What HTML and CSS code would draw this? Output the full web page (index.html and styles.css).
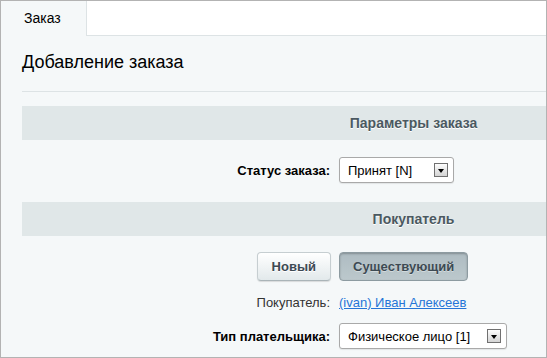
FILE: index.html
```html
<!DOCTYPE html>
<html lang="ru">
<head>
    <meta charset="UTF-8">
    <title>Добавление заказа</title>
    <link rel="stylesheet" href="styles.css">
</head>
<body>
    <div class="window">
        <div class="tabs">
            <div class="tab active">Заказ</div>
            <div class="tab-filler"></div>
        </div>

        <div class="content">
            <h1 class="page-title">Добавление заказа</h1>

            <div class="edit-table">
                <!-- Order params -->
                <div class="section-head">Параметры заказа</div>
                <div class="form-row row-status">
                    <div class="field-label bold">Статус заказа:</div>
                    <div class="field-value">
                        <div class="select select-status">
                            <span>Принят [N]</span>
                            <span class="select-arrow"></span>
                        </div>
                    </div>
                </div>

                <!-- Buyer -->
                <div class="section-head">Покупатель</div>
                <div class="form-row row-buttons">
                    <div class="field-label">
                        <button class="btn">Новый</button>
                    </div>
                    <div class="field-value">
                        <button class="btn btn-pressed">Существующий</button>
                    </div>
                </div>
                <div class="form-row row-buyer">
                    <div class="field-label muted">Покупатель:</div>
                    <div class="field-value">
                        <a href="#" class="user-link">(ivan) Иван Алексеев</a>
                    </div>
                </div>
                <div class="form-row row-payer">
                    <div class="field-label bold">Тип плательщика:</div>
                    <div class="field-value">
                        <div class="select select-payer">
                            <span>Физическое лицо [1]</span>
                            <span class="select-arrow"></span>
                        </div>
                    </div>
                </div>
            </div>
        </div>
    </div>
</body>
</html>
```

FILE: styles.css
```css
body {
    margin: 0;
    font-family: "Liberation Sans", Arial, sans-serif;
    font-size: 13px;
    color: #000;
    background-color: #fff;
}

.window {
    width: 547px;
    height: 358px;
    box-sizing: border-box;
    border: 1px solid #b3b3b3;
    background-color: #f5f8f9;
    overflow: hidden;
}

/* Tabs */
.tabs {
    display: flex;
    height: 35px;
}

.tab {
    width: 86px;
    box-sizing: border-box;
    padding-left: 23px;
    border-right: 1px solid #dde3e5;
    line-height: 34px;
    font-size: 14px;
    color: #000;
}

.tab-filler {
    flex: 1;
    box-sizing: border-box;
    background-color: #fff;
    border-bottom: 1px solid #dde3e5;
}

/* Content */
.content {
    padding-left: 21px;
}

.page-title {
    margin: 0;
    padding: 16px 0 19px;
    font-size: 18px;
    font-weight: normal;
    line-height: 20px;
    border-bottom: 1px solid #dde3e5;
}

.edit-table {
    width: 783px;
    margin-top: 14px;
}

.section-head {
    height: 34px;
    line-height: 34px;
    text-align: center;
    font-size: 14px;
    font-weight: bold;
    color: #4b5961;
    text-shadow: 0 1px 0 #fff;
    background-color: #e0e7e8;
}

.form-row {
    display: grid;
    grid-template-columns: 313px 470px;
    align-items: center;
}

.field-label {
    text-align: right;
    padding-right: 5px;
}

.field-value {
    padding-left: 4px;
}

.bold {
    font-weight: bold;
}

.muted {
    color: #333;
}

.row-status {
    padding: 17px 0 19px;
}

.row-buttons {
    padding-top: 16px;
}

.row-buttons .field-label {
    padding-right: 4px;
}

.row-buyer {
    padding-top: 14px;
    line-height: 16px;
}

.row-payer {
    padding-top: 12px;
}

/* Select box */
.select {
    display: flex;
    align-items: center;
    justify-content: space-between;
    height: 26px;
    box-sizing: border-box;
    padding: 0 5px 0 8px;
    border: 1px solid #a9a9a9;
    border-radius: 3px;
    background-color: #fff;
    box-shadow: 0 1px 1px rgba(0, 0, 0, 0.08);
}

.select-status {
    width: 115px;
}

.select-payer {
    width: 168px;
}

.select-arrow {
    position: relative;
    width: 14px;
    height: 14px;
    border: 1px solid #707070;
    background: linear-gradient(#fdfdfd, #d4d4d4);
    box-sizing: border-box;
}

.select-arrow::after {
    content: "";
    position: absolute;
    left: 3px;
    top: 5px;
    border-left: 3.5px solid transparent;
    border-right: 3.5px solid transparent;
    border-top: 4px solid #000;
}

/* Buttons */
.btn {
    height: 29px;
    padding: 0 14px;
    font-family: "Liberation Sans", Arial, sans-serif;
    font-size: 13px;
    font-weight: bold;
    color: #3d4a53;
    text-shadow: 0 1px 0 #fff;
    border: 1px solid #c6ced1;
    border-bottom-color: #aab4b8;
    border-radius: 4px;
    background: linear-gradient(#ffffff, #e2e9eb);
    box-shadow: 0 1px 1px rgba(0, 0, 0, 0.12);
    cursor: pointer;
}

.btn-pressed {
    padding: 0 13px;
    border-color: #8d9ba1;
    background: linear-gradient(#aebcc2, #bcc8cc);
    box-shadow: inset 0 1px 2px rgba(0, 0, 0, 0.25);
    text-shadow: 0 1px 0 rgba(255, 255, 255, 0.4);
}

.user-link {
    color: #2675d7;
    text-decoration: underline;
}
```
